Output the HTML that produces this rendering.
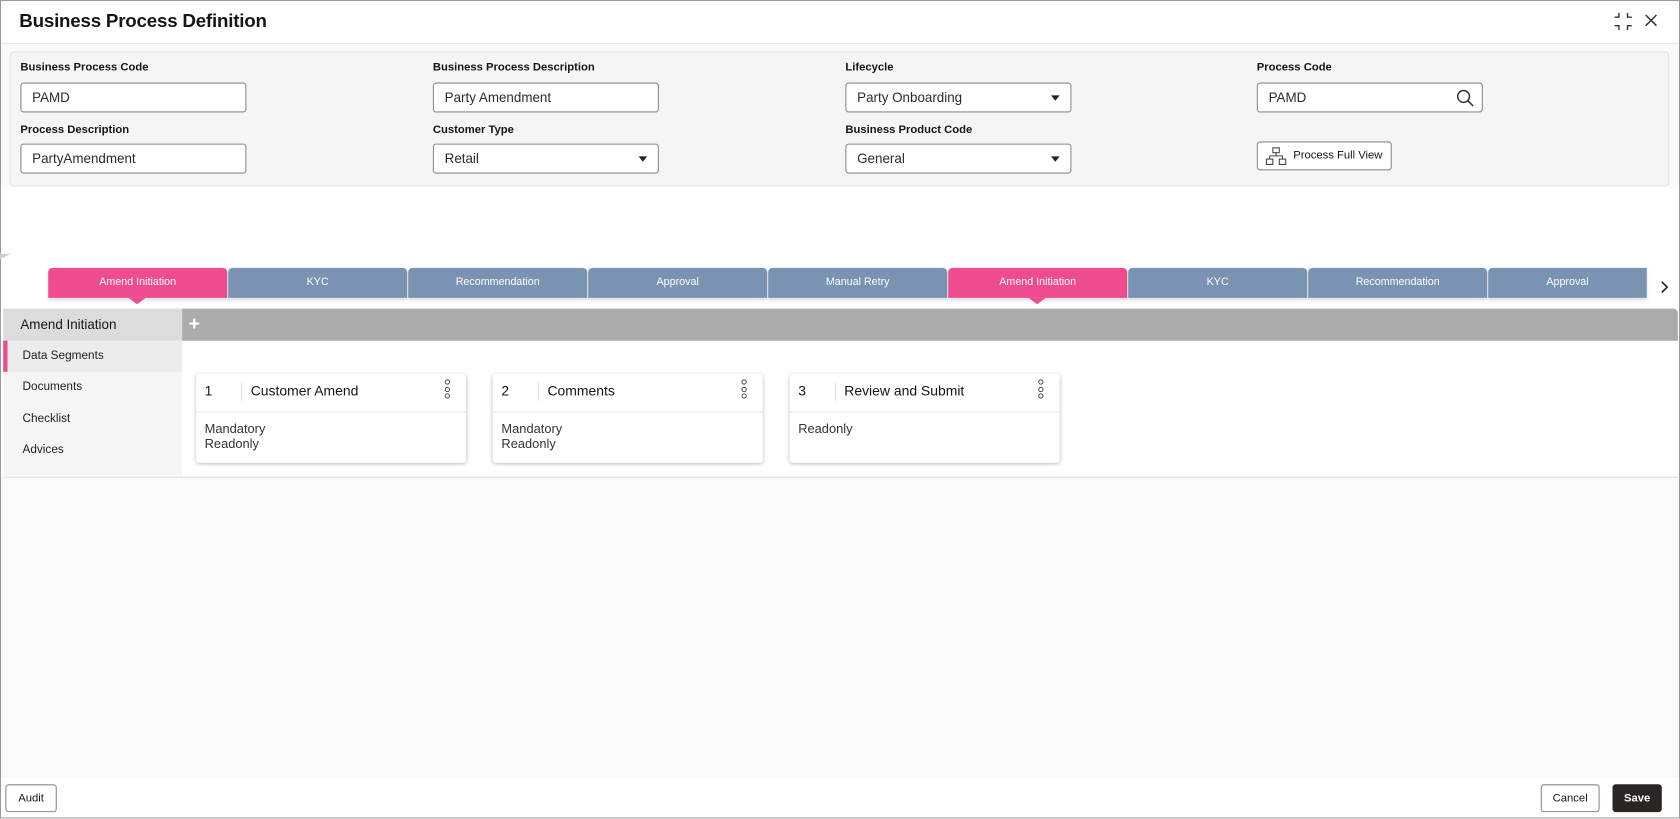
<!DOCTYPE html>
<html><head><meta charset="utf-8"><style>
*{box-sizing:border-box;margin:0;padding:0}
html,body{width:1680px;height:819px;overflow:hidden;background:#fff;font-family:"Liberation Sans",sans-serif;color:#161513}
#c{position:absolute;left:0;top:0;width:1568px;height:764px;transform:scale(1.07143);transform-origin:0 0;background:#fafafa;box-shadow:inset 0 0 0 1px #9a9a9a}
.abs{position:absolute}
.hdr{left:1px;top:1px;width:1566px;height:40px;background:#fff;border-bottom:1px solid #e4e4e4}
.title{left:18px;top:9px;font-size:17.5px;font-weight:bold;letter-spacing:-0.2px}
.panel{left:9px;top:48px;width:1549px;height:126px;background:#f5f5f5;border:1px solid #e2e2e2;border-radius:4px}
.lbl{font-size:10.5px;font-weight:bold;color:#161513}
.inp{width:211px;height:28px;background:#fff;border:1px solid #8a8a8a;border-radius:3px;font-size:12.5px;padding:0 10px;line-height:26px;color:#2b2b2b}
.dd:after{content:"";position:absolute;right:10px;top:11px;border-left:4px solid transparent;border-right:4px solid transparent;border-top:5px solid #222}
.mid{left:1px;top:175px;width:1566px;height:271px;background:#fff}
.tab{top:250px;width:167px;height:28px;background:#7b93b2;color:#fff;font-size:10px;text-align:center;line-height:28px;border-radius:4px 4px 0 0;box-shadow:0 2px 3px rgba(0,0,0,.12)}
.tab.p{background:#ef4b90}
.tab.p:after{content:"";position:absolute;left:75px;top:28px;border-left:8px solid transparent;border-right:8px solid transparent;border-top:6px solid #ef4b90}
.nav{left:3px;top:288px;width:167px;height:157px;background:#f5f5f5}
.navh{left:3px;top:288px;width:167px;height:30px;background:#dcdcdc;font-size:12.5px;padding-left:16px;line-height:30px}
.bar{left:170px;top:288px;width:1396px;height:30px;background:#ababab;border-radius:0 4px 0 0}
.ni{left:21px;font-size:11px;color:#222}
.card{top:349px;width:252px;height:83px;background:#fff;border-radius:3px;box-shadow:0 1px 4px rgba(0,0,0,.25)}
.card .n{position:absolute;left:8px;top:8px;font-size:13px}
.card .sep{position:absolute;left:42px;top:8px;width:1px;height:17px;background:#ddd}
.card .t{position:absolute;left:51px;top:8px;font-size:13px}
.card .hl{position:absolute;left:0;top:35px;width:100%;height:1px;background:#e4e4e4}
.card .b{position:absolute;left:8px;top:44px;font-size:12px;line-height:14px;color:#333}
.card .k{position:absolute;right:14px;top:5px;width:6px}
.card .k i{display:block;width:5px;height:5px;border:1px solid #555;border-radius:50%;margin-bottom:1.5px}
.btn{top:732px;height:26px;border:1px solid #8a8a8a;border-radius:3px;background:#fff;font-size:10.5px;text-align:center;line-height:24px}
.foot{left:1px;top:726px;width:1566px;height:37px;background:#fff}
</style></head><body><div id="c">
<div class="abs hdr"></div>
<div class="abs title">Business Process Definition</div>
<svg class="abs" style="left:1506px;top:11px" width="18" height="18" viewBox="0 0 18 18" fill="none" stroke="#333" stroke-width="1.3"><path d="M5 1v4H1M13 1v4h4M5 17v-4H1M13 17v-4h4"/></svg>
<svg class="abs" style="left:1535px;top:13px" width="12" height="12" viewBox="0 0 12 12" stroke="#333" stroke-width="1.4"><path d="M1 1l10 10M11 1L1 11"/></svg>

<div class="abs panel"></div>
<div class="abs lbl" style="left:19px;top:57px">Business Process Code</div>
<div class="abs inp" style="left:19px;top:77px">PAMD</div>
<div class="abs lbl" style="left:404px;top:57px">Business Process Description</div>
<div class="abs inp" style="left:404px;top:77px">Party Amendment</div>
<div class="abs lbl" style="left:789px;top:57px">Lifecycle</div>
<div class="abs inp dd" style="left:789px;top:77px">Party Onboarding</div>
<div class="abs lbl" style="left:1173px;top:57px">Process Code</div>
<div class="abs inp" style="left:1173px;top:77px">PAMD<svg style="position:absolute;right:7px;top:5px" width="17" height="17" viewBox="0 0 17 17" fill="none" stroke="#333" stroke-width="1.4"><circle cx="7" cy="7" r="5.5"/><path d="M11 11l5 5"/></svg></div>
<div class="abs lbl" style="left:19px;top:115px">Process Description</div>
<div class="abs inp" style="left:19px;top:134px">PartyAmendment</div>
<div class="abs lbl" style="left:404px;top:115px">Customer Type</div>
<div class="abs inp dd" style="left:404px;top:134px">Retail</div>
<div class="abs lbl" style="left:789px;top:115px">Business Product Code</div>
<div class="abs inp dd" style="left:789px;top:134px">General</div>
<div class="abs" style="left:1173px;top:132px;width:126px;height:27px;border:1px solid #8a8a8a;border-radius:3px;background:#fff;font-size:10.5px;line-height:25px;padding-left:33px">Process Full View
<svg style="position:absolute;left:7px;top:4px" width="20" height="18" viewBox="0 0 20 18" fill="none" stroke="#444" stroke-width="1"><rect x="7" y="1" width="6" height="4.5"/><path d="M10 5.5v3M4 8.5h12M4 8.5v3M16 8.5v3"/><rect x="1" y="11.5" width="6" height="5"/><rect x="13" y="11.5" width="6" height="5"/></svg></div>

<div class="abs mid"></div>
<div class="abs" style="left:0;top:237px;border-top:5px solid #ccc;border-right:10px solid transparent"></div>
<div class="abs tab p" style="left:45px">Amend Initiation</div>
<div class="abs tab" style="left:213px">KYC</div>
<div class="abs tab" style="left:381px">Recommendation</div>
<div class="abs tab" style="left:549px">Approval</div>
<div class="abs tab" style="left:717px">Manual Retry</div>
<div class="abs tab p" style="left:885px">Amend Initiation</div>
<div class="abs tab" style="left:1053px">KYC</div>
<div class="abs tab" style="left:1221px">Recommendation</div>
<div class="abs tab" style="left:1389px;width:148px;border-radius:4px 0 0 0">Approval</div>
<svg class="abs" style="left:1549px;top:262px" width="8" height="12" viewBox="0 0 8 12" fill="none" stroke="#222" stroke-width="1.5"><path d="M2 1l5 5-5 5"/></svg>

<div class="abs nav"></div>
<div class="abs navh">Amend Initiation</div>
<div class="abs bar"></div>
<div class="abs" style="left:176px;top:293px;color:#fff;font-size:18px;font-weight:bold;line-height:18px">+</div>
<div class="abs" style="left:3px;top:318px;width:167px;height:29px;background:#ececec;border-left:4px solid #ef4b90"></div>
<div class="abs ni" style="top:326px">Data Segments</div>
<div class="abs ni" style="top:355px">Documents</div>
<div class="abs ni" style="top:385px">Checklist</div>
<div class="abs ni" style="top:414px">Advices</div>

<div class="abs card" style="left:183px"><span class="n">1</span><span class="sep"></span><span class="t">Customer Amend</span><span class="k"><i></i><i></i><i></i></span><div class="hl"></div><div class="b">Mandatory<br>Readonly</div></div>
<div class="abs card" style="left:460px"><span class="n">2</span><span class="sep"></span><span class="t">Comments</span><span class="k"><i></i><i></i><i></i></span><div class="hl"></div><div class="b">Mandatory<br>Readonly</div></div>
<div class="abs card" style="left:737px"><span class="n">3</span><span class="sep"></span><span class="t">Review and Submit</span><span class="k"><i></i><i></i><i></i></span><div class="hl"></div><div class="b">Readonly</div></div>
<div class="abs" style="left:3px;top:445px;width:1563px;height:1px;background:#e0e0e0"></div>

<div class="abs foot"></div>
<div class="abs btn" style="left:5px;width:48px">Audit</div>
<div class="abs btn" style="left:1438px;width:55px">Cancel</div>
<div class="abs btn" style="left:1505px;width:46px;background:#2b2523;border-color:#2b2523;color:#fff;font-weight:bold">Save</div>
</div></body></html>
